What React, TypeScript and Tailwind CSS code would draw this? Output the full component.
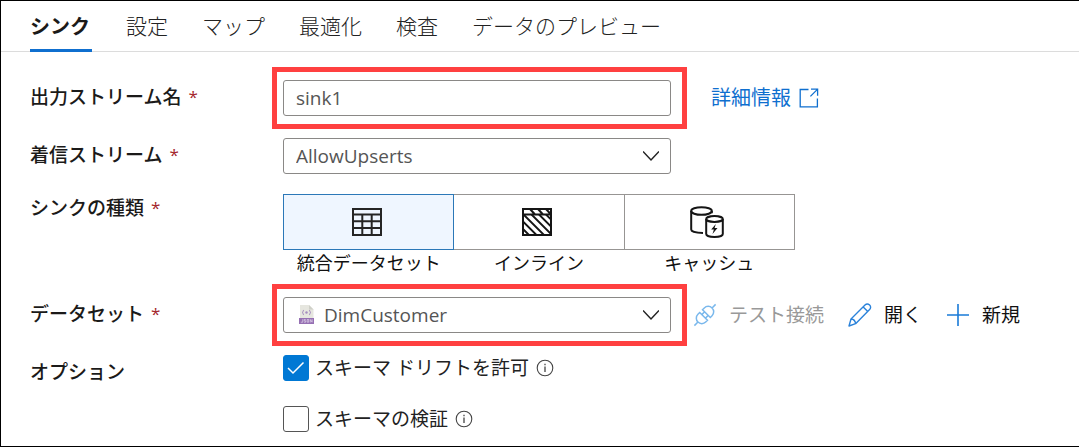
import { useState, type ReactNode } from "react";

const TABS = ["シンク", "設定", "マップ", "最適化", "検査", "データのプレビュー"];

function Chevron() {
  return (
    <svg className="pointer-events-none absolute top-3 right-3 h-3 w-4" viewBox="0 0 16 12" fill="none" stroke="#222" strokeWidth="1.5" aria-hidden="true">
      <path d="M0 1.5 8 10 16 1.5" />
    </svg>
  );
}

function ExternalIcon() {
  return (
    <svg className="h-5 w-5" viewBox="0 0 20 20" fill="none" stroke="#0f6fcf" strokeWidth="1.3" aria-hidden="true">
      <path d="M9.5 1.5H1.2v17.3h17.2V10.5M12 1.2h6.6v6.6M18.4 1.4l-7 7" />
    </svg>
  );
}

function TableIcon() {
  return (
    <svg className="h-7 w-[30px]" viewBox="0 0 30 28" fill="none" stroke="#252525" strokeWidth="2" aria-hidden="true">
      <path d="M1 1h28v26H1zM1 6.5h28M1 13.2h28M1 20h28M10.3 6.5V27M19.7 6.5V27" />
    </svg>
  );
}

function InlineIcon() {
  return (
    <svg className="h-7 w-[30px]" viewBox="0 0 30 28" fill="none" stroke="#151515" strokeWidth="2" aria-hidden="true">
      <path d="M1 1h28v26H1zM1 6.5h28M8 1l5 5.500M16 1l5 5.500M24 1l5 5.500" />
      <path d="M2 7l20 20M9.500 6.500 29 26M17 6.500l12 12M24 6.500l5 5M1 13.500 14.500 27M1 21l6 6" strokeWidth="1.8" />
    </svg>
  );
}

function CacheIcon() {
  return (
    <svg className="h-8 w-[34px]" viewBox="0 0 34 32" fill="none" stroke="#151515" strokeWidth="2" aria-hidden="true">
      <ellipse cx="11.5" cy="5" rx="10.3" ry="3.8" />
      <path d="M1.2 5v18.5c0 2 4.5 3.4 11.8 3.4M21.8 5v2.2" />
      <ellipse cx="24.5" cy="13" rx="8.3" ry="2.9" />
      <path d="M16.2 13v15c0 1.700 3.700 2.900 8.300 2.900s8.300-1.200 8.300-2.900V13" />
      <path d="M25.800 18l-4.600 5.600h2.700l-1.400 4.300 5-5.900h-2.900z" fill="#151515" stroke="none" />
    </svg>
  );
}

function JsonIcon() {
  return (
    <svg className="pointer-events-none absolute top-2 left-4 h-5 w-[15px]" viewBox="0 0 15 20" aria-hidden="true">
      <path d="M1 0h9l4.500 4.500V14H1z" fill="#e6e6df" />
      <path d="M10 0v4.500h4.500z" fill="#cfd0c8" />
      <path d="M5 5.200c-1.600 0-.4 2.300-1.700 2.300 1.300 0 .1 2.300 1.700 2.300M10 5.200c1.600 0 .4 2.300 1.700 2.300-1.300 0-.1 2.300-1.700 2.300" fill="none" stroke="#a58bbf" strokeWidth="1" />
      <circle cx="7.500" cy="7.500" r="1.200" fill="#a58bbf" />
      <path d="M0 13h15v6H0z" fill="#9670b3" />
      <path d="M3.800 14.200v3H1.800M6.700 14.500H5.200v1.300h1.500v1.400H5M8.200 14.500h1.500v2.700H8.200zM11.300 17.500v-3l1.800 2.700v-3" fill="none" stroke="#e4d8ee" strokeWidth=".7" />
    </svg>
  );
}

function PlugIcon() {
  return (
    <svg className="h-6 w-6" viewBox="0 0 24 24" fill="none" stroke="#7ab8ec" strokeWidth="1.5" aria-hidden="true">
      <g transform="rotate(-45 12 12)">
        <path d="M-3 12h5M22 12h5M10 6.500v11H7.500a5.500 5.500 0 0 1 0-11zM14 6.500v11h2.500a5.500 5.500 0 0 0 0-11zM10 9.500h4M10 14.500h4" />
      </g>
    </svg>
  );
}

function PencilIcon() {
  return (
    <svg className="h-6 w-6" viewBox="0 0 24 24" fill="none" stroke="#2a82da" strokeWidth="1.400" strokeLinejoin="round" aria-hidden="true">
      <path d="M1 23l2-7L17 2c1.300-1.300 3.200-1.300 4.600 0s1.300 3.300 0 4.600L7.600 20.700zM3 16c2.600.2 4.400 2 4.600 4.700M15.200 3.900l4.600 4.600" />
    </svg>
  );
}

function PlusIcon() {
  return (
    <svg className="h-6 w-6" viewBox="0 0 24 24" fill="none" stroke="#1a7bd8" strokeWidth="1.600" aria-hidden="true">
      <path d="M12 1v22M1 12h22" />
    </svg>
  );
}

function InfoIcon() {
  return (
    <svg className="h-[18px] w-[18px]" viewBox="0 0 18 18" fill="none" stroke="#444" strokeWidth="1.100" aria-hidden="true">
      <circle cx="9" cy="9" r="7.800" />
      <path d="M9 7.500V13M9 4.800v1.400" strokeWidth="1.300" />
    </svg>
  );
}

function Highlight() {
  return <span className="pointer-events-none absolute -top-[13px] -right-4 -bottom-[13px] -left-[11px] border-[5px] border-[#ff4040]" />;
}

function Required() {
  return <span className="ml-[7px] text-[17px] font-normal text-[#a4262c]">*</span>;
}

function Row({ children }: { children: ReactNode }) {
  return <div className="grid grid-cols-[253px_1fr] items-start">{children}</div>;
}

const LABEL = "flex h-[34px] items-center text-[19px] font-medium text-[#1b1a19]";
const FIELD = "h-9 w-full appearance-none rounded-[3px] border border-[#8a8886] bg-white pr-9 text-[19px] text-[#555] outline-none";

function SinkKind({ name, icon, checked, onSelect }: { name: string; icon: ReactNode; checked: boolean; onSelect: () => void }) {
  return (
    <label className="-ml-px flex flex-1 cursor-pointer flex-col items-center first-of-type:ml-0">
      <input type="radio" name="sinkKind" className="peer sr-only" checked={checked} onChange={onSelect} />
      <span className="flex h-14 w-full items-center justify-center border border-[#979593] pr-1 peer-checked:z-10 peer-checked:border-[#2b78b8] peer-checked:bg-[#eff6ff]">
        {icon}
      </span>
      <span className="text-[18px] leading-[26px] text-[#111]">{name}</span>
    </label>
  );
}

function Option({ name, checked, onToggle }: { name: string; checked: boolean; onToggle: () => void }) {
  return (
    <div className="flex items-center gap-[7px]">
      <label className="relative flex cursor-pointer items-center gap-[6px] text-[19px] leading-[26px] text-[#222]">
        <input
          type="checkbox"
          checked={checked}
          onChange={onToggle}
          className="peer h-[26px] w-[26px] appearance-none rounded-[3px] border border-[#555] bg-white checked:border-[#0078d4] checked:bg-[#0078d4]"
        />
        <svg className="pointer-events-none absolute left-1 hidden h-[18px] w-[18px] peer-checked:block" viewBox="0 0 18 18" fill="none" stroke="#fff" strokeWidth="1.500" aria-hidden="true">
          <path d="M1 9l5 5L16.500 3.500" />
        </svg>
        {name}
      </label>
      <button type="button" aria-label={name}>
        <InfoIcon />
      </button>
    </div>
  );
}

export default function App() {
  const [tab, setTab] = useState(TABS[0]);
  const [kind, setKind] = useState(0);
  const [drift, setDrift] = useState(true);
  const [validate, setValidate] = useState(false);
  const [stream, setStream] = useState("sink1");

  return (
    <main className="min-h-screen border-y border-l border-black bg-white font-['Open_Sans','Noto_Sans_CJK_JP',sans-serif]">
      <div role="tablist" className="flex h-[51px] gap-[34px] border-b border-[#dcdcdc] pl-[29px]">
        {TABS.map((t) => (
          <button
            key={t}
            type="button"
            role="tab"
            aria-selected={t === tab}
            onClick={() => setTab(t)}
            className={
              t === tab
                ? "-mb-px border-b-[3px] border-[#0f6fcf] pt-1 pr-[2px] text-[20px] font-bold text-[#1b1a19]"
                : "-mb-px border-b-[3px] border-transparent pt-1 text-[21px] font-light text-[#222]"
            }
          >
            {t}
          </button>
        ))}
      </div>

      <form className="flex flex-col pt-7 pl-[29px]" onSubmit={(e) => e.preventDefault()}>
        <Row>
          <label htmlFor="stream" className={LABEL}>出力ストリーム名<Required /></label>
          <div className="flex items-center gap-10">
            <div className="relative w-[388px]">
              <input id="stream" value={stream} onChange={(e) => setStream(e.target.value)} className={`${FIELD} pl-3`} />
              <Highlight />
            </div>
            <a href="#details" className="flex items-center gap-2 text-[20px] leading-9 text-[#0f6fcf]">
              詳細情報
              <ExternalIcon />
            </a>
          </div>
        </Row>

        <div className="mt-[22px]">
          <Row>
            <label htmlFor="incoming" className={LABEL}>着信ストリーム<Required /></label>
            <div className="relative w-[388px]">
              <select id="incoming" className={`${FIELD} pl-3`}>
                <option>AllowUpserts</option>
              </select>
              <Chevron />
            </div>
          </Row>
        </div>

        <div className="mt-5">
          <Row>
            <div id="kind" className="flex h-7 items-center text-[19px] font-medium text-[#1b1a19]">シンクの種類<Required /></div>
            <div role="radiogroup" aria-labelledby="kind" className="flex w-[512px]">
              <SinkKind name="統合データセット" icon={<TableIcon />} checked={kind === 0} onSelect={() => setKind(0)} />
              <SinkKind name="インライン" icon={<InlineIcon />} checked={kind === 1} onSelect={() => setKind(1)} />
              <SinkKind name="キャッシュ" icon={<CacheIcon />} checked={kind === 2} onSelect={() => setKind(2)} />
            </div>
          </Row>
        </div>

        <div className="mt-[21px]">
          <Row>
            <label htmlFor="dataset" className={LABEL}>データセット<Required /></label>
            <div className="flex items-center">
              <div className="relative w-[388px] shrink-0">
                <select id="dataset" className={`${FIELD} pl-10`}>
                  <option>DimCustomer</option>
                </select>
                <JsonIcon />
                <Chevron />
                <Highlight />
              </div>
              <div className="ml-[22px] flex items-center gap-6 text-[19px] whitespace-nowrap text-[#111]">
                <button type="button" disabled className="flex items-center gap-3 text-[#999]"><PlugIcon />テスト接続</button>
                <button type="button" className="flex items-center gap-3"><PencilIcon />開く</button>
                <button type="button" className="flex items-center gap-3"><PlusIcon />新規</button>
              </div>
            </div>
          </Row>
        </div>

        <div className="mt-[22px]">
          <Row>
            <div className={LABEL}>オプション</div>
            <div className="flex flex-col gap-[25px]">
              <Option name="スキーマ ドリフトを許可" checked={drift} onToggle={() => setDrift(!drift)} />
              <Option name="スキーマの検証" checked={validate} onToggle={() => setValidate(!validate)} />
            </div>
          </Row>
        </div>
      </form>
    </main>
  );
}
